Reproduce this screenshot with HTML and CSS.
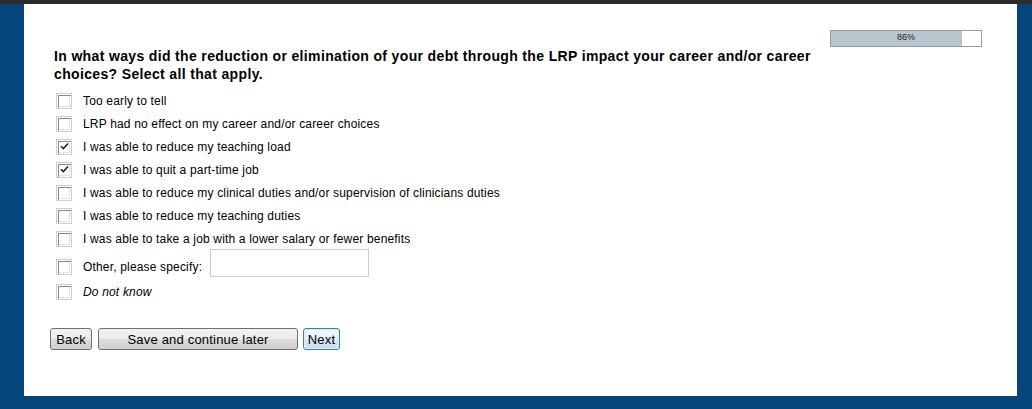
FILE: index.html
```html
<!DOCTYPE html>
<html lang="en">
<head>
    <meta charset="UTF-8">
    <title>LRP Survey</title>
    <link rel="stylesheet" href="styles.css">
</head>
<body>

<div class="topbar"></div>

<div class="page">
    <div class="panel">

        <!-- Progress -->
        <div class="progress-row">
            <div class="progress">
                <div class="progress-fill" style="width: 87%"></div>
                <span class="progress-text">86%</span>
            </div>
        </div>

        <h2 class="question">In what ways did the reduction or elimination of your debt through the LRP impact your career and/or career choices? Select all that apply.</h2>

        <!-- Choices -->
        <ul class="choices">
            <li><span class="box"></span><label>Too early to tell</label></li>
            <li><span class="box"></span><label>LRP had no effect on my career and/or career choices</label></li>
            <li><span class="box checked"><svg viewBox="0 0 9 9"><path d="M1 4.2 L3.4 6.6 L8 1.5" /></svg></span><label>I was able to reduce my teaching load</label></li>
            <li><span class="box checked"><svg viewBox="0 0 9 9"><path d="M1 4.2 L3.4 6.6 L8 1.5" /></svg></span><label>I was able to quit a part-time job</label></li>
            <li><span class="box"></span><label>I was able to reduce my clinical duties and/or supervision of clinicians duties</label></li>
            <li><span class="box"></span><label>I was able to reduce my teaching duties</label></li>
            <li><span class="box"></span><label>I was able to take a job with a lower salary or fewer benefits</label></li>
            <li class="other"><span class="box"></span><label>Other, please specify:</label><input type="text" class="specify"></li>
            <li class="dontknow"><span class="box"></span><label><em>Do not know</em></label></li>
        </ul>

        <!-- Buttons -->
        <div class="buttons">
            <button class="btn btn-back">Back</button>
            <button class="btn btn-save">Save and continue later</button>
            <button class="btn btn-next">Next</button>
        </div>

    </div>
</div>

</body>
</html>
```

FILE: styles.css
```css
/* Page frame */
body {
    margin: 0;
    background: #04467c;
    font-family: 'Liberation Sans', Arial, sans-serif;
    color: #000;
    height: 409px;
    overflow: hidden;
}

.topbar {
    height: 4px;
    background: #2b2b2b;
}

.page {
    padding: 0 15px 0 24px;
}

.panel {
    background: #fff;
    height: 392px;
    box-sizing: border-box;
    padding: 26px 0 0 30px;
}

/* Progress bar */
.progress-row {
    display: flex;
    justify-content: flex-end;
    padding-right: 35px;
}

.progress {
    position: relative;
    width: 150px;
    height: 15px;
    border: 1px solid #9a9a9a;
    background: #fff;
}

.progress-fill {
    height: 100%;
    background: #b8c6cd;
}

.progress-text {
    position: absolute;
    top: 0;
    left: 0;
    right: 0;
    text-align: center;
    font-size: 9px;
    line-height: 12px;
    color: #222;
}

/* Question */
.question {
    margin: 0;
    width: 775px;
    font-size: 14px;
    line-height: 18px;
    font-weight: bold;
    letter-spacing: 0.35px;
}

.choices {
    list-style-type: none;
    margin: 6px 0 0 0;
    padding: 0;
}

.choices li {
    display: flex;
    align-items: center;
    height: 23px;
    font-size: 12px;
    letter-spacing: 0.17px;
}

.box {
    width: 16px;
    height: 16px;
    margin: 0 11px 0 2px;
    border: 1px solid #cfcfcf;
    box-sizing: border-box;
    display: flex;
    align-items: center;
    justify-content: center;
    flex-shrink: 0;
    background: #fff;
    box-shadow: inset 1px 1px 0 #fff, inset 2px 2px 0 #8a8a8a, inset -1px -1px 0 #fff, inset -2px -2px 0 #e4e4e4;
}

.box svg {
    width: 9px;
    height: 9px;
}

.box svg path {
    fill: none;
    stroke: #1c1c5a;
    stroke-width: 1.6;
}

.choices li.other {
    height: 34px;
}

.specify {
    align-self: flex-start;
    width: 159px;
    height: 28px;
    box-sizing: border-box;
    border: 1px solid #cccccc;
    margin: -1px 0 0 8px;
    padding: 2px 4px;
    font-size: 12px;
}

.choices li.dontknow {
    height: 16px;
}

/* Buttons */
.buttons {
    display: flex;
    gap: 5px;
    margin: 28px 0 0 -4px;
}

.btn {
    height: 22px;
    padding: 0;
    font-family: 'Liberation Sans', Arial, sans-serif;
    font-size: 13px;
    letter-spacing: 0.2px;
    color: #000;
    border: 1px solid #707070;
    border-radius: 3px;
    background: linear-gradient(#f2f2f2, #ebebeb 50%, #dddddd 51%, #cfcfcf);
}

.btn-back {
    width: 42px;
}

.btn-save {
    width: 200px;
    margin-left: 1px;
}

.btn-next {
    width: 37px;
    border-color: #3c7fb1;
    background: linear-gradient(#f2f8fc, #e6f1f9 50%, #d6e8f5 51%, #c6dcee);
    box-shadow: inset 0 0 0 1px #d6ecfa;
}
```
